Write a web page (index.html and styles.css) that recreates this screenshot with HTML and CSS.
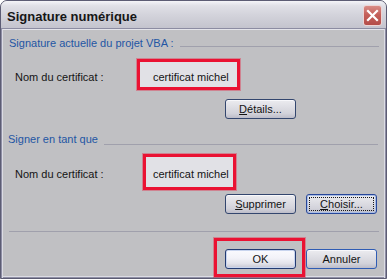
FILE: index.html
```html
<!DOCTYPE html>
<html lang="fr">
<head>
<meta charset="utf-8">
<title>Signature numérique</title>
<link rel="stylesheet" href="styles.css">
</head>
<body>
<div class="window">
  <div class="titlebar">
    <span class="title">Signature numérique</span>
    <span class="close"><svg width="19" height="21" viewBox="0 0 19 21"><path d="M5 6 L14 15 M14 6 L5 15" stroke="#fff" stroke-width="2.2" stroke-linecap="square" fill="none"/></svg></span>
  </div>
  <div class="client">
    <div class="legend legend-first"><span class="legend-text">Signature actuelle du projet VBA :</span><span class="rule"></span></div>
    <div class="field field-first">
      <span class="label label-first">Nom du certificat :</span>
      <span class="cert cert-first">certificat michel</span>
    </div>
    <div class="btnrow btnrow-first">
      <button class="btn btn-details"><u>D</u>étails...</button>
    </div>
    <div class="legend legend-second"><span class="legend-text">Signer en tant que</span><span class="rule"></span></div>
    <div class="field field-second">
      <span class="label label-second">Nom du certificat :</span>
      <span class="cert cert-second">certificat michel</span>
    </div>
    <div class="btnrow btnrow-second">
      <button class="btn"><u>S</u>upprimer</button>
      <button class="btn btn-focus"><span class="focus"><u>C</u>hoisir...</span></button>
    </div>
    <div class="separator"></div>
    <div class="btnrow btnrow-bottom">
      <span class="mark"><button class="btn btn-default">OK</button></span>
      <button class="btn btn-cancel">Annuler</button>
    </div>
  </div>
</div>
</body>
</html>
```

FILE: styles.css
```css
* { box-sizing: border-box; }
html, body { margin: 0; padding: 0; background: #ffffff; }
body {
  width: 387px;
  height: 279px;
  overflow: hidden;
  font-family: "Liberation Sans", Arial, sans-serif;
  font-size: 11px;
  color: #141414;
}
.window {
  width: 387px;
  height: 279px;
  border: 1px solid #5c5c74;
  border-radius: 7px 7px 0 0;
  background: #c0c0c3;
  display: flex;
  flex-direction: column;
  overflow: hidden;
}
.titlebar {
  flex: none;
  height: 28px;
  display: flex;
  align-items: flex-start;
  padding-left: 6px;
  background: linear-gradient(#f4f4f8 0, #dfdfe6 18%, #d2d2da 55%, #c4c4ce 100%);
  border-bottom: 1px solid #8c8ca2;
}
.title {
  font-weight: bold;
  font-size: 13px;
  line-height: 16px;
  margin-top: 8px;
  color: #161616;
}
.close {
  margin-left: auto;
  margin-right: 4px;
  margin-top: 4px;
  width: 19px;
  height: 21px;
  border-radius: 3px;
  border: 1px solid #ecd4d4;
  background: linear-gradient(#d98c86, #c4605a 45%, #b44c48);
  display: flex;
}
.close svg { display: block; margin: -1px; }
.client {
  flex: 1;
  padding: 0 7px 0 8px;
  box-shadow: inset 1px 0 0 #8e8ea4, inset 2px 0 0 #dcdce4, inset -1px 0 0 #8e8ea4, inset -2px 0 0 #dcdce4, inset 0 -1px 0 #8e8ea4, inset 0 -2px 0 #dcdce4, inset 0 1px 0 #e4e4ea;
}
.legend {
  display: flex;
  align-items: flex-start;
  height: 14px;
  line-height: 14px;
  color: #2356a4;
}
.legend-first { margin-top: 7px; }
.legend-second { margin-top: 13px; margin-left: -1px; }
.rule {
  flex: 1;
  height: 1px;
  background: #a0a0ac;
  margin-left: 6px;
}
.legend-first .rule { margin-top: 10px; }
.legend-second .rule { margin-top: 12px; margin-right: 1px; }
.field {
  display: flex;
  align-items: baseline;
  line-height: 14px;
}
.field-first { margin-top: 9px; }
.field-second { margin-top: 8px; }
.label { flex: none; margin-left: 6px; }
.label-first { width: 122px; }
.label-second { width: 128px; }
.cert {
  flex: none;
  display: block;
  border: 3px solid #ea1233;
  background: #e1e1e6;
  box-shadow: 0 0 0 1px rgba(234, 18, 51, 0.35);
  white-space: nowrap;
}
.cert-first { width: 103px; height: 31px; padding: 8px 0 3px 13px; }
.cert-second { width: 93px; height: 36px; padding: 10px 0 6px 7px; }
.btnrow {
  display: flex;
  justify-content: flex-end;
  align-items: flex-start;
  gap: 10px;
  padding-right: 2px;
}
.btnrow-first { margin-top: 9px; }
.btnrow-second { margin-top: 4px; }
.btnrow-bottom { margin-top: 6px; gap: 1px; }
.btn {
  flex: none;
  width: 71px;
  height: 20px;
  padding: 0;
  margin: 0;
  font-family: "Liberation Sans", Arial, sans-serif;
  font-size: 11px;
  line-height: 18px;
  color: #141414;
  text-align: center;
  border: 1px solid #33466e;
  border-radius: 3px;
  background: linear-gradient(#ececf0 0, #dedee4 40%, #d2d2da 75%, #bcbcc8 100%);
  box-shadow: inset 0 1px 0 #f8f8fb;
}
.btnrow .btn-details { margin-right: 81px; }
.btn u { text-decoration: underline; }
.btn-focus {
  border-color: #27479a;
  box-shadow: inset 0 0 0 1px #a8bce4;
  padding: 2px;
  line-height: 14px;
}
.focus {
  display: block;
  height: 14px;
  outline: 1px dotted #1a1a1a;
  outline-offset: -1px;
}
.btn-default {
  border-color: #223a72;
  background: linear-gradient(#fafafe 0, #f2f2f8 45%, #e2e2ea 75%, #c4c4d2 100%);
  box-shadow: inset 0 0 0 1px #c8d4ee;
}
.btnrow .btn-cancel {
  margin-top: 11px;
  border-color: #2f5cb4;
}
.separator {
  height: 1px;
  margin-top: 17px;
  background: #a0a0ac;
}
.mark {
  flex: none;
  display: block;
  border: 3px solid #ea1233;
  box-shadow: 0 0 0 1px rgba(234, 18, 51, 0.35);
  padding: 8px 6px 5px 8px;
}
.mark .btn { display: block; }
```
